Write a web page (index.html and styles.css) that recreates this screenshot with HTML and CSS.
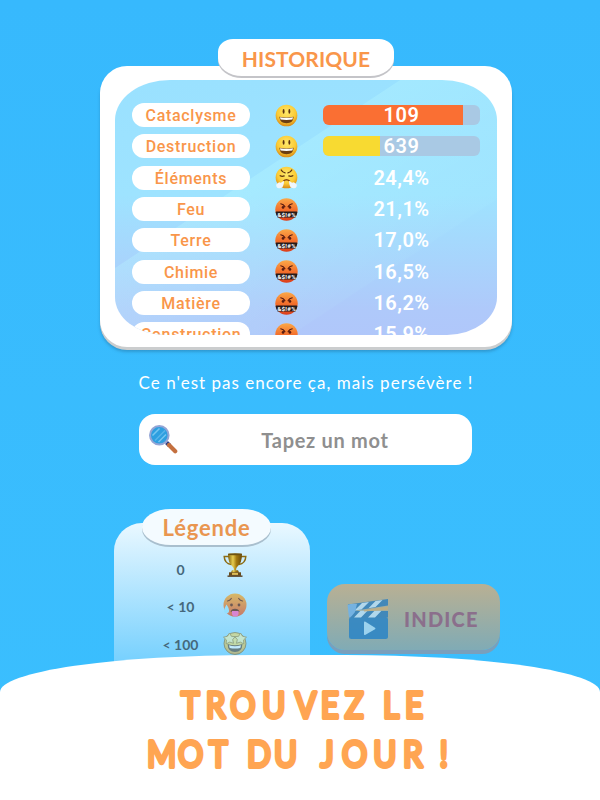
FILE: index.html
```html
<!DOCTYPE html>
<html lang="fr">
<head>
    <meta charset="UTF-8">
    <meta name="viewport" content="width=device-width, initial-scale=1.0">
    <title>Trouvez le mot du jour</title>
    <link rel="stylesheet" href="styles.css">
</head>
<body>
    <!-- Shared icons -->
    <svg class="sprite" width="0" height="0">
        <defs>
            <radialGradient id="yellow" cx=".5" cy=".35" r=".65">
                <stop offset="0" stop-color="#ffe96b"/>
                <stop offset=".65" stop-color="#fbcb35"/>
                <stop offset="1" stop-color="#d98a16"/>
            </radialGradient>
            <linearGradient id="red" x1="0" y1="0" x2="0" y2="1">
                <stop offset="0" stop-color="#fba848"/>
                <stop offset=".5" stop-color="#f3702c"/>
                <stop offset="1" stop-color="#dc3d1b"/>
            </linearGradient>
            <linearGradient id="hot" x1="0" y1="0" x2="0" y2="1">
                <stop offset="0" stop-color="#e8a828"/>
                <stop offset="1" stop-color="#d8502c"/>
            </linearGradient>
            <linearGradient id="gold" x1="0" y1="0" x2="1" y2="0">
                <stop offset="0" stop-color="#80600a"/>
                <stop offset=".35" stop-color="#e6cc50"/>
                <stop offset=".6" stop-color="#a47a10"/>
                <stop offset="1" stop-color="#6b4a08"/>
            </linearGradient>
        </defs>
        <symbol id="smile" viewBox="0 0 24 24">
            <circle cx="12" cy="12" r="11.3" fill="url(#yellow)"/>
            <ellipse cx="9" cy="7.8" rx="1" ry="2.5" fill="#5b3210"/>
            <ellipse cx="15" cy="7.8" rx="1" ry="2.5" fill="#5b3210"/>
            <path d="M4.5 13.3q7.5 1.4 15 0q-.5 6.7-7.5 6.700t-7.5-6.700z" fill="#6b3d10"/>
            <path d="M5.2 13.800q6.800 1.200 13.600 0l-.6 2.400q-6.200 1-12.400 0z" fill="#fff"/>
        </symbol>
        <symbol id="steam" viewBox="0 0 24 24">
            <circle cx="12" cy="12" r="11.3" fill="url(#yellow)"/>
            <path d="M6.5 4.2q1.3 2.600 4 3M17.500 4.200q-1.300 2.600-4 3M5.400 10.200q2 1 4.200.1M14.400 10.300q2.200.9 4.200-.1" fill="none" stroke="#5b3210" stroke-width="1.3" stroke-linecap="round"/>
            <path d="M8.500 15.800q3.500-3 7 0" fill="none" stroke="#8a4a10" stroke-width="1.4"/>
            <path d="M9.500 15.500q-.2 3.500-1 5q-.4 2.500-2.800 2.500Q2 24 1.500 21.500q-1-2.700 1.600-3.500q1-1.500 3-.6zM14.500 15.500q.2 3.500 1 5q.4 2.500 2.800 2.500q3.700 1 4.200-1.500q1-2.700-1.600-3.500q-1-1.500-3-.6z" fill="#f1f6fa"/>
        </symbol>
        <symbol id="swear" viewBox="0 0 24 24">
            <circle cx="12" cy="12" r="11.7" fill="url(#red)"/>
            <path d="M6 6q3 .6 4.300 3M18 6q-3 .6-4.300 3" fill="none" stroke="#5a1c10" stroke-width="1.2" stroke-linecap="round"/>
            <circle cx="8.4" cy="9.8" r="1.4" fill="#5a1c10"/>
            <circle cx="15.6" cy="9.8" r="1.4" fill="#5a1c10"/>
            <path d="M1.5 14h21q1 0 .8 1-.5 3-2 5.400H2.700Q1.200 18 .7 15q-.2-1 .8-1z" fill="#241b1b"/>
            <text x="12" y="19.7" text-anchor="middle" textLength="19.5" class="swear-text">&amp;$!#%</text>
        </symbol>
        <symbol id="trophy" viewBox="0 0 24 24">
            <path d="M6 3.500H1.200q.3 7 7 8M18 3.500h4.800q-.3 7-7 8" fill="none" stroke="#8c6c14" stroke-width="1.5"/>
            <path d="M5 .8h14q0 9.500-4.500 12.700q-1.500 1.200-1.500 4h-2q0-2.800-1.500-4Q5 10.300 5 .8z" fill="url(#gold)"/>
            <ellipse cx="12" cy="1.3" rx="7" ry="1" fill="#6d5210"/>
            <path d="M9 17.300h6l1.200 2.500H7.800z" fill="url(#gold)"/>
            <rect x="6" y="19.3" width="12" height="3.5" fill="#6a4a18"/>
            <rect x="9" y="19.9" width="6" height="2" fill="#dcbc58"/>
            <rect x="4.5" y="22.5" width="15" height="1.3" fill="#4f3414"/>
        </symbol>
        <symbol id="hotface" viewBox="0 0 24 24">
            <circle cx="12" cy="12" r="11.5" fill="url(#hot)"/>
            <path d="M4.500 8q2.300-.2 3.800-2.500M19.500 8q-2.300-.2-3.800-2.500" fill="none" stroke="#54200c" stroke-width="1.2" stroke-linecap="round"/>
            <circle cx="8.5" cy="12" r="1.4" fill="#54200c"/>
            <circle cx="16" cy="12" r="1.4" fill="#54200c"/>
            <path d="M7.500 18.800q.8-3 4.500-3t4.500 3z" fill="#54200c"/>
            <path d="M9 18h6.500v2.500q0 3-3.200 3T9 20.500z" fill="#f060c0"/>
            <path d="M3.500 11.500q3 4.500 2.500 7q-.5 2-2.600 1.900T1 18.200q0-2.700 2.500-6.700z" fill="#8ee0ff"/>
        </symbol>
        <symbol id="starface" viewBox="0 0 24 24">
            <circle cx="12" cy="12.5" r="11" fill="url(#yellow)" stroke="#6e4a00" stroke-width=".8"/>
            <path d="M6.500 2l1.900 3.300 3.700.4-2.400 2.900.8 3.700-3.800-1.200-3.500 1.800.2-4L.5 6.200l4-1zM17.500 2l2 3.200 4 1-2.900 2.700.2 4-3.500-1.800-3.800 1.200.8-3.700-2.400-2.900 3.700-.4z" fill="#fff3a0" stroke="#8a6200" stroke-width=".8"/>
            <path d="M4.500 13q7.500 2.500 15 0q-.3 8-7.500 8t-7.500-8z" fill="#4c2b08"/>
            <path d="M6 14.300q6 1.700 12 0l-.7 2.700q-5.300 1-10.600 0z" fill="#fff"/>
        </symbol>
    </svg>

    <div class="app">
        <section class="history">
            <h2 class="tab history-tab">HISTORIQUE</h2>
            <div class="history-card">
                <div class="screen">
                    <div class="row">
                        <span class="word">Cataclysme</span>
                        <svg class="emoji"><use href="#smile"/></svg>
                        <div class="bar"><div class="fill orange" style="width: 89%"></div><span class="score">109</span></div>
                    </div>
                    <div class="row">
                        <span class="word">Destruction</span>
                        <svg class="emoji"><use href="#smile"/></svg>
                        <div class="bar"><div class="fill yellow" style="width: 36%"></div><span class="score">639</span></div>
                    </div>
                    <div class="row">
                        <span class="word">Éléments</span>
                        <svg class="emoji"><use href="#steam"/></svg>
                        <span class="score">24,4%</span>
                    </div>
                    <div class="row">
                        <span class="word">Feu</span>
                        <svg class="emoji"><use href="#swear"/></svg>
                        <span class="score">21,1%</span>
                    </div>
                    <div class="row">
                        <span class="word">Terre</span>
                        <svg class="emoji"><use href="#swear"/></svg>
                        <span class="score">17,0%</span>
                    </div>
                    <div class="row">
                        <span class="word">Chimie</span>
                        <svg class="emoji"><use href="#swear"/></svg>
                        <span class="score">16,5%</span>
                    </div>
                    <div class="row">
                        <span class="word">Matière</span>
                        <svg class="emoji"><use href="#swear"/></svg>
                        <span class="score">16,2%</span>
                    </div>
                    <div class="row">
                        <span class="word">Construction</span>
                        <svg class="emoji"><use href="#swear"/></svg>
                        <span class="score">15,9%</span>
                    </div>
                </div>
            </div>
        </section>

        <p class="message">Ce n'est pas encore ça, mais persévère !</p>

        <div class="search">
            <svg class="search-icon" viewBox="0 0 30 30">
                <path d="M18.500 18.500l3 3" stroke="#2f3f86" stroke-width="4"/>
                <path d="M21 21l6.200 6.200" stroke="#c4703f" stroke-width="4.2" stroke-linecap="round"/>
                <circle cx="11.3" cy="11.3" r="9.3" fill="#2e9fe0" stroke="#93a5d6" stroke-width="2"/>
                <path d="M4.500 11.500l7-7M10.500 18l7.500-7.500" stroke="#76c6f0" stroke-width="1.5"/>
                <path d="M7 16.500L17 6.500" stroke="#58b6ea" stroke-width="1.5"/>
            </svg>
            <span class="placeholder">Tapez un mot</span>
        </div>

        <div class="lower">
            <section class="legend">
                <h2 class="tab legend-tab">Légende</h2>
                <div class="legend-card">
                    <div class="legend-row"><span>0</span><svg class="emoji"><use href="#trophy"/></svg></div>
                    <div class="legend-row"><span>&lt; 10</span><svg class="emoji"><use href="#hotface"/></svg></div>
                    <div class="legend-row"><span>&lt; 100</span><svg class="emoji"><use href="#starface"/></svg></div>
                </div>
            </section>
            <div class="hint">
                <svg class="clap" viewBox="0 0 42 42">
                    <rect x="2" y="19" width="39" height="22" rx="2.5" fill="#2482c8"/>
                    <path d="M1 6.500L41 1v6.500L2.500 13.500zM2 13h39v6.500H2z" fill="#2a7fc0"/>
                    <path d="M15 5l7-1-7.500 7.500-7 1zM28.500 3l7-1-7 7-7 1.200zM13.500 12.800h7L14 19.500H7zM27.500 12.800h7L28 19.500h-7z" fill="#b4e2ff"/>
                    <path d="M.5 7Q5 5 10 6L8 14q-4 5.500-6 5.500z" fill="#6ab4f2"/>
                    <path d="M17 12.200l24-3.700v3.300l-24 1.700z" fill="#c4ae80"/>
                    <path d="M17 24.500q0-1.500 1.500-.7l9.500 6q1 .7 0 1.400l-9.500 5.600q-1.500.7-1.500-.7z" fill="#9edcff"/>
                </svg>
                <span>INDICE</span>
            </div>
        </div>
    </div>

    <footer class="banner">
        <svg width="600" height="145" viewBox="0 0 600 145">
            <!-- narrow lettering: glyphs squeezed to 85% -->
            <g transform="scale(.85 1)">
                <text y="63.5" x="213 242 271 308.5 347 377.5 405.5 435 450.5 476.5">TROUVEZ LE</text>
                <text y="112.5" x="173 209.500 246 275 290.500 322.500 350 377 402.500 439 474 500 517">MOT DU JOUR !</text>
            </g>
        </svg>
    </footer>
</body>
</html>
```
FILE: styles.css
```css
* {
    box-sizing: border-box;
}

body {
    font-family: 'Lato', sans-serif;
    background: linear-gradient(#37b9fd, #3bbffe);
    margin: 0;
    width: 600px;
    height: 800px;
    overflow: hidden;
}

.sprite {
    position: absolute;
}

.app {
    height: 655px;
    padding: 39px 0 0 100px;
}

.tab {
    display: flex;
    align-items: center;
    justify-content: center;
    margin: 0 auto;
    background: #fff;
    color: #f9964a;
    font-weight: 700;
    position: relative;
    z-index: 1;
}

/* History */
.history {
    width: 412px;
}

.history-tab {
    width: 176px;
    height: 37px;
    padding-top: 1px;
    border-radius: 15px 15px 24px 24px / 13px 13px 18px 18px;
    box-shadow: 0 2px 0 #c4c4c8;
    font-size: 21px;
    letter-spacing: 0.1px;
}

.history-card {
    height: 281px;
    margin-top: -10px;
    padding: 14px 15px 12px;
    background: #fff;
    border-radius: 27px;
    box-shadow: 0 3px 0 #cbcdce, 0 5px 3px rgba(30, 90, 130, 0.35);
}

.screen {
    height: 255px;
    padding: 23px 17px 0;
    overflow: hidden;
    border-radius: 55px 55px 50px 50px / 40px 40px 38px 38px;
    background:
        linear-gradient(146.6deg, transparent 37%, rgba(190, 255, 255, 0.25) 37.2%, rgba(190, 255, 255, 0.06) 73%, transparent 73.4%),
        linear-gradient(#9ae1ff 0%, #9ee3ff 45%, #afc9fa 90%, #b0c7fa 100%);
}

.row {
    display: grid;
    grid-template-columns: 118px 73px 157px;
    align-items: center;
    height: 24px;
    margin-bottom: 7.35px;
}

.word {
    height: 24px;
    line-height: 25px;
    border-radius: 12px;
    background: #fff;
    color: #f9964a;
    font-family: 'Roboto', sans-serif;
    font-size: 16px;
    font-weight: 500;
    letter-spacing: 0.7px;
    text-align: center;
}

.emoji {
    display: block;
    width: 23px;
    height: 23px;
    margin: 0 auto;
}

.swear-text {
    font: bold 6.5px 'Roboto', sans-serif;
    fill: #fff;
}

.score {
    font-family: 'Roboto', sans-serif;
    color: #fff;
    font-size: 20px;
    font-weight: 600;
    line-height: 20px;
    letter-spacing: 0.5px;
    text-align: center;
}

.bar {
    display: grid;
    grid-template-rows: 20px;
    height: 20px;
    border-radius: 6px;
    background: #a9c9e4;
}

.bar > * {
    grid-area: 1 / 1;
}

.fill {
    height: 20px;
    border-radius: 6px 0 0 6px;
}

.orange {
    background: #fa6f33;
}

.yellow {
    background: #f8da31;
}

/* Message and input */
.message {
    width: 412px;
    margin: 26px 0 0;
    color: #fff;
    font-size: 17px;
    line-height: 20px;
    letter-spacing: 1.03px;
    text-align: center;
    white-space: nowrap;
}

.search {
    display: flex;
    align-items: center;
    width: 333px;
    height: 51px;
    margin: 21px 0 0 39px;
    padding-left: 9px;
    background: #fff;
    border-radius: 16px;
}

.search-icon {
    width: 30px;
    height: 30px;
    margin-top: -1px;
}

.placeholder {
    flex: 1;
    color: #8f8f8f;
    font-size: 20px;
    font-weight: 700;
    letter-spacing: 0.7px;
    text-align: center;
}

/* Legend and hint, fading into the page colour */
.lower {
    display: flex;
    align-items: flex-start;
    margin: 44px 0 0 14px;
}

.legend {
    width: 196px;
}

.legend-tab {
    width: 129px;
    height: 36px;
    border-radius: 32px / 20px;
    background: #f4fbff;
    box-shadow: 0 2px 0 #a9bfce;
    color: #e99650;
    font-size: 22px;
    letter-spacing: 0.8px;
    margin-left: 28px;
}

.legend-card {
    height: 150px;
    margin-top: -22px;
    padding-top: 31px;
    border-radius: 28px 28px 0 0;
    background: linear-gradient(#eaf8ff, #78d1fe 137px);
}

.legend-row {
    display: grid;
    grid-template-columns: 133px 0;
    justify-items: center;
    align-items: center;
    height: 24px;
    margin-bottom: 14.5px;
}

.legend-row span {
    padding-top: 3px;
    color: #45687c;
    font-size: 14px;
    font-weight: 700;
}

.legend-row:first-child span {
    padding-top: 7px;
}

.legend-row:first-child .emoji {
    margin-top: -2px;
}

.legend-row .emoji {
    width: 24px;
    height: 24px;
    margin-left: -24px;
}

.legend-row:nth-child(2) .emoji {
    opacity: 0.7;
}

.legend-row:nth-child(3) .emoji {
    opacity: 0.5;
}

.hint {
    display: flex;
    align-items: center;
    width: 173px;
    height: 66px;
    margin: 75px 0 0 17px;
    padding: 4px 0 0 20px;
    border-radius: 18px;
    background: linear-gradient(#b9b093, #80abb5);
    box-shadow: 0 4px 0 #7a9fbb;
    color: #8b6f8c;
    font-size: 20px;
    font-weight: 900;
    letter-spacing: 1.2px;
}

.clap {
    width: 42px;
    height: 42px;
    margin-right: 15px;
    opacity: 0.8;
}

/* Bottom banner, drawn over the end of the legend card */
.banner {
    position: relative;
    z-index: 2;
    height: 145px;
    background: #fff;
    border-radius: 255px 255px 0 0 / 37px 37px 0 0;
}

.banner text {
    font-family: 'Lato', sans-serif;
    font-size: 37px;
    font-weight: 400;
    fill: #ffa552;
    stroke: #ffa552;
    stroke-width: 4px;
    stroke-linejoin: round;
}
```
